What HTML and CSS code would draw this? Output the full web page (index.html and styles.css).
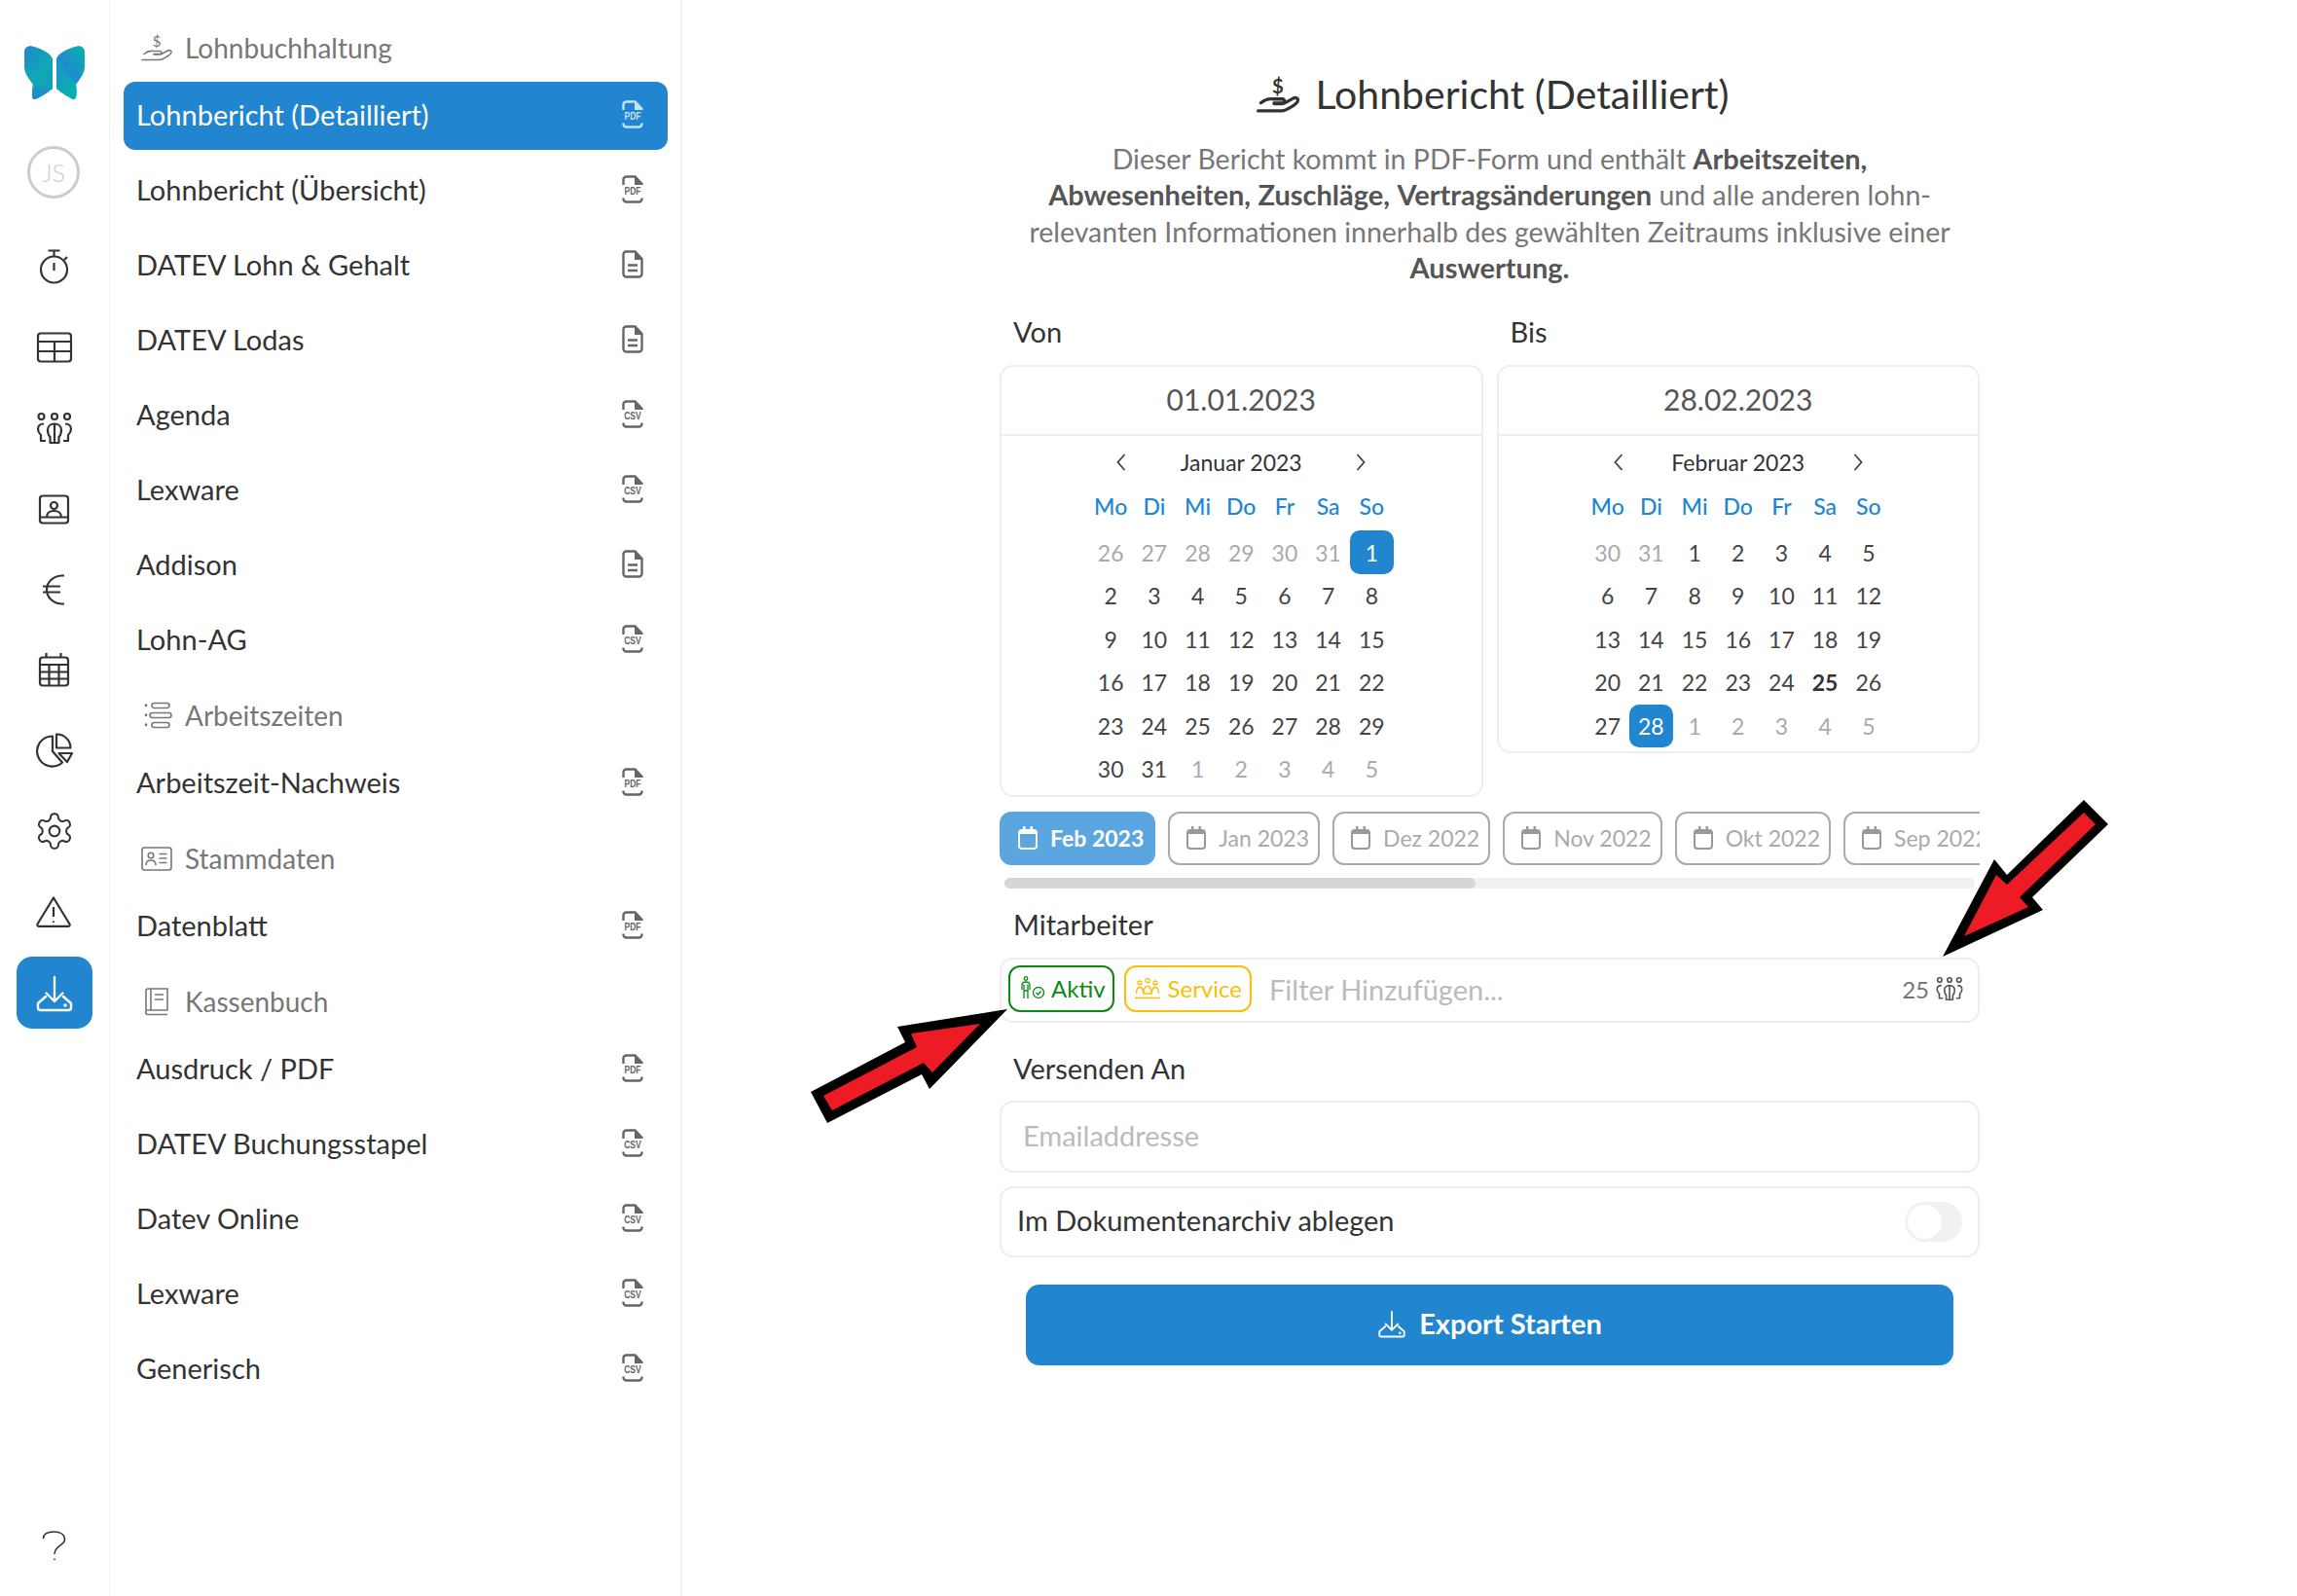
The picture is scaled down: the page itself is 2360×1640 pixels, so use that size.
FILE: index.html
```html
<!DOCTYPE html>
<html lang="de">
<head>
    <meta charset="utf-8">
    <title>Lohnbericht (Detailliert)</title>
    <link rel="stylesheet" href="styles.css">
</head>
<body>

<!-- icon sprite -->
<svg class="sprite" width="0" height="0">
    <defs>
        <linearGradient id="wing-left" x1="0" y1="0" x2="0.7" y2="1">
            <stop offset="0" stop-color="#2186d0"/>
            <stop offset="0.6" stop-color="#0fa8b4"/>
            <stop offset="1" stop-color="#12a0bc"/>
        </linearGradient>
        <linearGradient id="wing-right" x1="1" y1="0" x2="0.3" y2="1">
            <stop offset="0" stop-color="#02b5a8"/>
            <stop offset="0.55" stop-color="#1f8ccd"/>
            <stop offset="1" stop-color="#1a96c6"/>
        </linearGradient>
        <linearGradient id="wing-low-left" x1="0" y1="0" x2="0" y2="1">
            <stop offset="0" stop-color="#12a0bc"/>
            <stop offset="1" stop-color="#2186d0"/>
        </linearGradient>
        <linearGradient id="wing-low-right" x1="0" y1="0" x2="1" y2="1">
            <stop offset="0" stop-color="#1a96c6"/>
            <stop offset="1" stop-color="#02b5a8"/>
        </linearGradient>
        <g id="file-frame">
            <path d="M1.500 10V4.500a3 3 0 0 1 3-3H13.500L20.500 9v1" fill="none" stroke="currentColor" stroke-width="2.400"/>
            <path d="M13 1.500h1L21 9v1h-8z" fill="currentColor"/>
            <path d="M1.500 23.500v1a3 3 0 0 0 3 3h13a3 3 0 0 0 3-3v-1" fill="none" stroke="currentColor" stroke-width="2.400"/>
        </g>
        <g id="hand-shape">
            <path d="M1 26.500H19c3 0 11-5 12-7.500.7-2-1.500-3-3.500-2L21 20.500H13M3 20.500c3-2.500 6-3.500 9-3h7c2.500 0 2.500 3.500 0 3.500h-6" fill="none" stroke="currentColor" stroke-linecap="round"/>
        </g>
    </defs>
    <symbol id="i-doc" viewBox="0 0 22 29">
        <path d="M1.500 4.500a3 3 0 0 1 3-3H13.500L20.500 9v15.500a3 3 0 0 1-3 3h-13a3 3 0 0 1-3-3z" fill="none" stroke="currentColor" stroke-width="2.400"/>
        <path d="M13 1.500h1L21 9v1h-8z" fill="currentColor"/>
        <path d="M6 15.500h10M6 21h10" stroke="currentColor" stroke-width="2.400"/>
    </symbol>
    <symbol id="i-download" viewBox="0 0 40 40">
        <path d="M20 4v25M11.500 20.500l8.500 8.500 8.500-8.500M11 24l-8 7v4.500a2.500 2.500 0 0 0 2.500 2.500h29a2.500 2.500 0 0 0 2.500-2.500V31l-8-7" fill="none" stroke="currentColor" stroke-width="2.400" stroke-linecap="round" stroke-linejoin="round"/>
        <circle cx="31" cy="33" r="1.800" fill="currentColor"/>
    </symbol>
    <symbol id="i-people" viewBox="0 0 40 40">
        <g fill="none" stroke="currentColor" stroke-width="2.200" stroke-linejoin="round">
            <circle cx="6.500" cy="8" r="3"/><circle cx="20" cy="8" r="3"/><circle cx="33" cy="8" r="3"/>
            <path d="M15.500 35v-6c-2-2-2.500-4.500-2.500-7 0-4 3-6.500 7-6.500s7 2.500 7 6.500c0 2.500-.5 5-2.500 7v6zM20 16v19"/>
            <path d="M9 15.500c-4 0-6 2.500-6 5.500 0 2.500 1.500 4.500 3 6v6h5M31 15.500c4 0 6 2.500 6 5.500 0 2.500-1.500 4.500-3 6v6h-5"/>
        </g>
    </symbol>
    <symbol id="i-month" viewBox="0 0 20 24">
        <rect x="1" y="4" width="18" height="19" rx="3" fill="none" stroke="currentColor" stroke-width="2"/>
        <path d="M1 4h18v4H1zM5 0h2.500v4H5zM12.500 0H15v4h-2.500z" fill="currentColor"/>
    </symbol>
    <symbol id="i-prev" viewBox="0 0 12 20">
        <path d="M9.500 2 2.500 10l7 8" fill="none" stroke="currentColor" stroke-width="1.800"/>
    </symbol>
    <symbol id="i-next" viewBox="0 0 12 20">
        <path d="M2.500 2l7 8-7 8" fill="none" stroke="currentColor" stroke-width="1.800"/>
    </symbol>
</svg>

<div class="app">
    <aside class="rail">
        <svg class="logo" viewBox="0 0 62 56">
            <path d="M0 6C0 2 4-.5 8 .5 18 3 27 8 29 13v31c-5 4-15 11-19 11-3 0-2-8-1-15C4 33 0 28 0 21z" fill="url(#wing-left)"/>
            <path d="M9 40l20 4c-5 4-15 11-19 11-3 0-2-8-1-15z" fill="url(#wing-low-left)"/>
            <path d="M62 6c0-4-4-6.500-8-5.500C44 3 35 8 33 13v31c5 4 15 11 18 11 3 0 3-8 2-15 5-7 9-12 9-19z" fill="url(#wing-right)"/>
            <path d="M33 13l20 27c1 7 1 15-2 15-3 0-13-7-18-11z" fill="url(#wing-low-right)"/>
        </svg>
        <div class="avatar">JS</div>

        <a class="rail-item">
            <svg viewBox="0 0 40 40"><circle cx="19.500" cy="23" r="13.500"/><path d="M13.500 3.500h12M19.500 3.500V9.500M19.500 16v8M30 13l3-3"/></svg>
        </a>
        <a class="rail-item">
            <svg viewBox="0 0 40 40"><rect x="3" y="5.500" width="34" height="29" rx="3"/><path d="M3 14h34M3 24h34M20 14v20"/></svg>
        </a>
        <a class="rail-item">
            <svg><use href="#i-people"/></svg>
        </a>
        <a class="rail-item">
            <svg viewBox="0 0 40 40"><rect x="5" y="6.500" width="29" height="28" rx="3"/><circle cx="19.500" cy="16.500" r="3.500"/><path d="M12 28.500c0-4.500 3-6.500 7.500-6.500s7.500 2 7.500 6.500M5 28.500h29"/></svg>
        </a>
        <a class="rail-item">
            <svg viewBox="0 0 40 40"><path d="M30 5.500h-2C19 5.500 12 12 12 20s7 14.500 16 14.500h2M8 16.500h18M8 22.500h18"/></svg>
        </a>
        <a class="rail-item">
            <svg viewBox="0 0 40 40"><rect x="5" y="7.500" width="29" height="29" rx="3"/><path d="M5 15h29M5 22.500h29M5 29.500h29M14.500 15v21.500M24.500 15v21.500M11.500 3v4.500M26.500 3v4.500"/></svg>
        </a>
        <a class="rail-item">
            <svg viewBox="0 0 40 40"><path d="M18 5.500A15.500 15.500 0 1 0 28 32.500L18 21zM22 3.500A14 14 0 0 1 36.500 17.500H22zM24.500 23h13.500l-5 9z"/></svg>
        </a>
        <a class="rail-item">
            <svg viewBox="0 0 40 40"><g transform="translate(-1.400 -1.400) scale(1.780)" stroke-width="1.150"><path d="M12.220 2h-.44a2 2 0 0 0-2 2v.18a2 2 0 0 1-1 1.730l-.43.25a2 2 0 0 1-2 0l-.15-.08a2 2 0 0 0-2.730.73l-.22.38a2 2 0 0 0 .73 2.730l.15.100a2 2 0 0 1 1 1.720v.51a2 2 0 0 1-1 1.740l-.15.09a2 2 0 0 0-.73 2.730l.22.38a2 2 0 0 0 2.730.73l.15-.08a2 2 0 0 1 2 0l.43.25a2 2 0 0 1 1 1.730V20a2 2 0 0 0 2 2h.44a2 2 0 0 0 2-2v-.18a2 2 0 0 1 1-1.730l.43-.25a2 2 0 0 1 2 0l.15.08a2 2 0 0 0 2.730-.73l.22-.39a2 2 0 0 0-.73-2.730l-.15-.08a2 2 0 0 1-1-1.740v-.5a2 2 0 0 1 1-1.740l.15-.09a2 2 0 0 0 .73-2.730l-.22-.38a2 2 0 0 0-2.730-.73l-.15.08a2 2 0 0 1-2 0l-.43-.25a2 2 0 0 1-1-1.730V4a2 2 0 0 0-2-2z"/><circle cx="12" cy="12" r="3"/></g></svg>
        </a>
        <a class="rail-item">
            <svg viewBox="0 0 40 40"><path d="M19 5.500 35.500 32.500a1.500 1.500 0 0 1-1.300 2.300H3.800a1.500 1.500 0 0 1-1.300-2.300zM19 15v10M19 29.500v1.500"/></svg>
        </a>
        <a class="rail-item active">
            <span class="rail-box"><svg><use href="#i-download"/></svg></span>
        </a>
        <a class="rail-item help">
            <svg viewBox="0 0 40 40"><path d="M8.500 13C8.500 8 13 6 19.500 6S30.500 9 30.500 14c0 6-10.500 6-10.500 15M20 33.500v1.500"/></svg>
        </a>
    </aside>

    <nav class="reports">
        <div class="section-head">
            <svg class="section-icon" viewBox="0 0 32 28"><text x="16" y="13" text-anchor="middle" class="hand-label">$</text><use href="#hand-shape"/></svg>
            <span>Lohnbuchhaltung</span>
        </div>
        <a class="report active"><span>Lohnbericht (Detailliert)</span><svg class="file-icon" viewBox="0 0 22 29"><use href="#file-frame"/><text y="20.500" class="file-label">PDF</text></svg></a>
        <a class="report"><span>Lohnbericht (Übersicht)</span><svg class="file-icon" viewBox="0 0 22 29"><use href="#file-frame"/><text y="20.500" class="file-label">PDF</text></svg></a>
        <a class="report"><span>DATEV Lohn &amp; Gehalt</span><svg class="file-icon"><use href="#i-doc"/></svg></a>
        <a class="report"><span>DATEV Lodas</span><svg class="file-icon"><use href="#i-doc"/></svg></a>
        <a class="report"><span>Agenda</span><svg class="file-icon" viewBox="0 0 22 29"><use href="#file-frame"/><text y="20.500" class="file-label">CSV</text></svg></a>
        <a class="report"><span>Lexware</span><svg class="file-icon" viewBox="0 0 22 29"><use href="#file-frame"/><text y="20.500" class="file-label">CSV</text></svg></a>
        <a class="report"><span>Addison</span><svg class="file-icon"><use href="#i-doc"/></svg></a>
        <a class="report"><span>Lohn-AG</span><svg class="file-icon" viewBox="0 0 22 29"><use href="#file-frame"/><text y="20.500" class="file-label">CSV</text></svg></a>

        <div class="section-head">
            <svg class="section-icon" viewBox="0 0 32 28">
                <path d="M5 3.500v.5M5 13.500v.5M5 23.500v.5" stroke="currentColor" stroke-width="2.600" stroke-linecap="round"/>
                <path d="M13.500 1.500h13a2.500 2.500 0 0 1 0 5h-13a2.500 2.500 0 0 1 0-5zM11.500 11.500h17a2.500 2.500 0 0 1 0 5h-17a2.500 2.500 0 0 1 0-5zM13.500 21.500h13a2.500 2.500 0 0 1 0 5h-13a2.500 2.500 0 0 1 0-5z" fill="none" stroke="currentColor"/>
            </svg>
            <span>Arbeitszeiten</span>
        </div>
        <a class="report"><span>Arbeitszeit-Nachweis</span><svg class="file-icon" viewBox="0 0 22 29"><use href="#file-frame"/><text y="20.500" class="file-label">PDF</text></svg></a>

        <div class="section-head">
            <svg class="section-icon" viewBox="0 0 32 28">
                <rect x="1" y="3" width="30" height="23" rx="2.500" fill="none" stroke="currentColor"/>
                <circle cx="10" cy="11" r="2.800" fill="none" stroke="currentColor"/>
                <path d="M5 21c0-3.500 2-5 5-5s5 1.500 5 5M18.500 9.500h8M18.500 14h8M18.500 18.500h8" fill="none" stroke="currentColor"/>
            </svg>
            <span>Stammdaten</span>
        </div>
        <a class="report"><span>Datenblatt</span><svg class="file-icon" viewBox="0 0 22 29"><use href="#file-frame"/><text y="20.500" class="file-label">PDF</text></svg></a>

        <div class="section-head">
            <svg class="section-icon" viewBox="0 0 32 28">
                <path d="M5 23V3a2 2 0 0 1 2-2h20v22H7a2 2 0 0 0 0 4.500h20M10 1v22M14 7h9M14 12h9" fill="none" stroke="currentColor"/>
            </svg>
            <span>Kassenbuch</span>
        </div>
        <a class="report"><span>Ausdruck / PDF</span><svg class="file-icon" viewBox="0 0 22 29"><use href="#file-frame"/><text y="20.500" class="file-label">PDF</text></svg></a>
        <a class="report"><span>DATEV Buchungsstapel</span><svg class="file-icon" viewBox="0 0 22 29"><use href="#file-frame"/><text y="20.500" class="file-label">CSV</text></svg></a>
        <a class="report"><span>Datev Online</span><svg class="file-icon" viewBox="0 0 22 29"><use href="#file-frame"/><text y="20.500" class="file-label">CSV</text></svg></a>
        <a class="report"><span>Lexware</span><svg class="file-icon" viewBox="0 0 22 29"><use href="#file-frame"/><text y="20.500" class="file-label">CSV</text></svg></a>
        <a class="report"><span>Generisch</span><svg class="file-icon" viewBox="0 0 22 29"><use href="#file-frame"/><text y="20.500" class="file-label">CSV</text></svg></a>
    </nav>

    <main class="content">
        <div class="column">
            <h1 class="title">
                <svg class="title-icon" viewBox="0 0 32 28"><text x="16" y="13" text-anchor="middle" class="hand-label">$</text><use href="#hand-shape"/></svg>
                Lohnbericht (Detailliert)
            </h1>
            <p class="intro">Dieser Bericht kommt in PDF-Form und enthält <b>Arbeitszeiten,</b> <b>Abwesenheiten,</b> <b>Zuschläge,</b> <b>Vertragsänderungen</b> und alle anderen lohn-relevanten Informationen innerhalb des gewählten Zeitraums inklusive einer <b>Auswertung.</b></p>

            <div class="dates">
                <div class="date-col">
                    <label class="field-label">Von</label>
                    <div class="date-card">
                        <div class="date-value">01.01.2023</div>
                        <div class="month-nav"><svg class="chev"><use href="#i-prev"/></svg><span>Januar 2023</span><svg class="chev"><use href="#i-next"/></svg></div>
                        <div class="cal">
                            <span class="wd">Mo</span><span class="wd">Di</span><span class="wd">Mi</span><span class="wd">Do</span><span class="wd">Fr</span><span class="wd">Sa</span><span class="wd">So</span>
                            <span class="off">26</span><span class="off">27</span><span class="off">28</span><span class="off">29</span><span class="off">30</span><span class="off">31</span><span class="sel">1</span>
                            <span>2</span><span>3</span><span>4</span><span>5</span><span>6</span><span>7</span><span>8</span>
                            <span>9</span><span>10</span><span>11</span><span>12</span><span>13</span><span>14</span><span>15</span>
                            <span>16</span><span>17</span><span>18</span><span>19</span><span>20</span><span>21</span><span>22</span>
                            <span>23</span><span>24</span><span>25</span><span>26</span><span>27</span><span>28</span><span>29</span>
                            <span>30</span><span>31</span><span class="off">1</span><span class="off">2</span><span class="off">3</span><span class="off">4</span><span class="off">5</span>
                        </div>
                    </div>
                </div>
                <div class="date-col">
                    <label class="field-label">Bis</label>
                    <div class="date-card">
                        <div class="date-value">28.02.2023</div>
                        <div class="month-nav"><svg class="chev"><use href="#i-prev"/></svg><span>Februar 2023</span><svg class="chev"><use href="#i-next"/></svg></div>
                        <div class="cal">
                            <span class="wd">Mo</span><span class="wd">Di</span><span class="wd">Mi</span><span class="wd">Do</span><span class="wd">Fr</span><span class="wd">Sa</span><span class="wd">So</span>
                            <span class="off">30</span><span class="off">31</span><span>1</span><span>2</span><span>3</span><span>4</span><span>5</span>
                            <span>6</span><span>7</span><span>8</span><span>9</span><span>10</span><span>11</span><span>12</span>
                            <span>13</span><span>14</span><span>15</span><span>16</span><span>17</span><span>18</span><span>19</span>
                            <span>20</span><span>21</span><span>22</span><span>23</span><span>24</span><span class="today">25</span><span>26</span>
                            <span>27</span><span class="sel">28</span><span class="off">1</span><span class="off">2</span><span class="off">3</span><span class="off">4</span><span class="off">5</span>
                        </div>
                    </div>
                </div>
            </div>

            <div class="months">
                <button class="month current"><svg><use href="#i-month"/></svg>Feb 2023</button>
                <button class="month"><svg><use href="#i-month"/></svg>Jan 2023</button>
                <button class="month"><svg><use href="#i-month"/></svg>Dez 2022</button>
                <button class="month"><svg><use href="#i-month"/></svg>Nov 2022</button>
                <button class="month"><svg><use href="#i-month"/></svg>Okt 2022</button>
                <button class="month"><svg><use href="#i-month"/></svg>Sep 2022</button>
            </div>
            <div class="scrollbar"><div class="scroll-thumb"></div></div>

            <label class="field-label staff-label">Mitarbeiter</label>
            <div class="filter-box">
                <span class="chip chip-green">
                    <svg viewBox="0 0 24 24">
                        <circle cx="5" cy="2.500" r="1.800"/>
                        <path d="M1 14V9c0-2 1.500-3 4-3s4 1 4 3v5M3 8.500V23M7 8.500V23M3 15h4"/>
                        <circle cx="18" cy="17" r="5.500"/>
                        <path d="M15.500 17l2 2 3-3.500"/>
                    </svg>
                    Aktiv
                </span>
                <span class="chip chip-yellow">
                    <svg viewBox="0 0 28 24">
                        <circle cx="14" cy="4.500" r="2.200"/><circle cx="6" cy="7" r="2"/><circle cx="22" cy="7" r="2"/>
                        <path d="M10 18c0-5 1.500-7.500 4-7.500s4 2.500 4 7.500zM2.500 18c0-4 1-6.500 3.500-6.500s3.500 2.500 3.500 6.500M25.500 18c0-4-1-6.500-3.500-6.500s-3.500 2.500-3.500 6.500M1 22.500h26"/>
                    </svg>
                    Service
                </span>
                <span class="filter-placeholder">Filter Hinzufügen...</span>
                <span class="filter-count">25 <svg><use href="#i-people"/></svg></span>
            </div>

            <label class="field-label send-label">Versenden An</label>
            <input class="email" type="text" placeholder="Emailaddresse">
            <div class="archive">
                <span>Im Dokumentenarchiv ablegen</span>
                <span class="toggle"><span class="knob"></span></span>
            </div>
            <button class="export"><svg><use href="#i-download"/></svg>Export Starten</button>
        </div>
    </main>
</div>

<!-- annotation arrows lying over the page -->
<svg class="arrow arrow-right" viewBox="0 0 175 165">
    <polygon class="arrow-edge" points="146,2 171,27 93,102 104,115 1,163 54,63 67,79"/>
    <polygon class="arrow-fill" points="146,15 158,27 80,102 89,112 23,142 56,79 67,89"/>
</svg>
<svg class="arrow arrow-left" viewBox="0 0 205 122">
    <polygon class="arrow-edge" points="204,2 124,84 116,69 19,119 2,87 99,36 91,20"/>
    <polygon class="arrow-fill" points="176,17 127,67 118,57 24,106 15,91 111,41 105,27"/>
</svg>

</body>
</html>
```

FILE: styles.css
```css
* {
    box-sizing: border-box;
}

html, body {
    margin: 0;
    height: 100%;
    overflow: hidden;
}

body {
    position: relative;
    font-family: 'Lato', 'Noto Sans', sans-serif;
    font-size: 29px;
    color: #333;
    background-color: #fff;
}

.sprite {
    position: absolute;
}

.app {
    display: flex;
    height: 1640px;
}

/* icon rail */
.rail {
    width: 113px;
    flex: none;
    display: flex;
    flex-direction: column;
    align-items: center;
    padding: 47px 0 11px;
    border-right: 1px solid #f3f3f3;
}

.logo {
    width: 62px;
    height: 56px;
    flex: none;
}

.avatar {
    width: 54px;
    height: 54px;
    margin: 47px 2px 29px 0;
    flex: none;
    border: 3px solid #ccc;
    border-radius: 50%;
    display: flex;
    align-items: center;
    justify-content: center;
    color: #ccc;
    font-size: 25px;
    font-weight: 300;
}

.rail-item {
    width: 100%;
    height: 82.8px;
    flex: none;
    display: flex;
    align-items: center;
    justify-content: center;
    color: #333;
}

.rail-item svg {
    width: 40px;
    height: 40px;
    fill: none;
    stroke: #333;
    stroke-width: 2.2;
    stroke-linejoin: round;
}

.rail-item svg use {
    stroke: none;
}

.rail-item.active {
    color: #fff;
}

.rail-box {
    width: 78px;
    height: 74px;
    display: flex;
    align-items: center;
    justify-content: center;
    background-color: #2185d0;
    border-radius: 16px;
}

.rail-box svg {
    stroke: none;
}

.help {
    margin-top: auto;
}

.help svg {
    stroke-width: 1.6;
}

/* report list */
.reports {
    width: 588px;
    flex: none;
    padding: 14px 13px 0 14px;
    border-right: 2px solid #f3f3f3;
}

.section-head {
    height: 70px;
    display: flex;
    align-items: center;
    padding-left: 18px;
    gap: 13px;
    color: #777;
    font-size: 28px;
}

.section-icon {
    width: 32px;
    height: 28px;
    flex: none;
    stroke-width: 1.6;
    overflow: visible;
}

.hand-label {
    font-family: 'Lato', sans-serif;
    font-size: 15px;
    fill: currentColor;
    stroke: none;
}

.file-label {
    font-family: 'Liberation Sans', sans-serif;
    font-size: 11px;
    font-weight: 700;
    text-anchor: middle;
    fill: currentColor;
    transform: translateX(11px) scaleX(0.78);
}

.report {
    height: 70px;
    margin-bottom: 7px;
    padding: 0 25px 3px 13px;
    display: flex;
    align-items: center;
    justify-content: space-between;
    border-radius: 12px;
    color: #333;
}

.report.active {
    background-color: #2185d0;
    color: #fff;
}

.file-icon {
    width: 22px;
    height: 29px;
    flex: none;
    color: #666;
    overflow: visible;
}

.report.active .file-icon {
    color: #c6e0f5;
}

/* main column */
.content {
    flex: 1;
    display: flex;
    justify-content: center;
    padding-top: 74px;
}

.column {
    width: 1007px;
}

.title {
    margin: 0;
    height: 48px;
    padding: 0 0 2px 6px;
    display: flex;
    align-items: center;
    justify-content: center;
    gap: 17px;
    font-size: 41px;
    line-height: 48px;
    font-weight: 400;
    color: #333;
}

.title-icon {
    width: 44px;
    height: 38px;
    color: #333;
    stroke-width: 2.4;
    overflow: visible;
}

.title-icon .hand-label {
    font-weight: 700;
}

.intro {
    margin: 23px 20px 0;
    color: #777;
    font-size: 28.5px;
    text-align: center;
    line-height: 37.4px;
}

.intro b {
    color: #555;
    font-size: 29px;
    line-height: 30px;
    font-weight: 700;
}

.dates {
    display: flex;
    align-items: flex-start;
    gap: 14px;
    margin-top: 28px;
}

.date-col {
    width: 496.5px;
}

.field-label {
    display: block;
    height: 38px;
    line-height: 36px;
    padding-left: 14px;
    color: #333;
}

.date-card {
    margin-top: 14px;
    border: 2px solid #eee;
    border-radius: 14px;
    padding-bottom: 4px;
}

.date-value {
    height: 71px;
    line-height: 66px;
    text-align: center;
    border-bottom: 2px solid #eee;
    color: #555;
    font-size: 30px;
}

.month-nav {
    width: 266px;
    height: 40px;
    margin: 7px auto 0;
    display: flex;
    align-items: center;
    justify-content: space-between;
    font-size: 23px;
    color: #333;
}

.chev {
    width: 12px;
    height: 20px;
    margin: 0 4px;
    color: #444;
}

.cal {
    display: grid;
    grid-template-columns: repeat(7, 44.7px);
    grid-template-rows: 47.6px;
    grid-auto-rows: 44.6px;
    justify-content: center;
    margin-top: 3px;
    font-size: 23px;
    color: #444;
}

.cal span {
    display: flex;
    align-items: center;
    justify-content: center;
}

.cal .wd {
    padding-bottom: 3px;
    color: #2185d0;
    font-weight: 500;
}

.cal .off {
    color: #aaa;
}

.cal .sel {
    background-color: #2185d0;
    color: #fff;
    border-radius: 10px;
}

.cal .today {
    color: #333;
    font-weight: 700;
}

/* month shortcuts */
.months {
    display: flex;
    gap: 13px;
    margin-top: 15px;
    overflow: hidden;
}

.month {
    height: 55px;
    flex: none;
    padding: 0 9px 0 17px;
    display: flex;
    align-items: center;
    gap: 13px;
    font-family: inherit;
    font-size: 23px;
    color: #aaa;
    background-color: #fff;
    border: 2px solid #aaa;
    border-radius: 12px;
}

.month svg {
    width: 20px;
    height: 24px;
    color: #999;
}

.month.current {
    padding-right: 10px;
    background-color: #5ca6df;
    border-color: #5ca6df;
    color: #fff;
    font-weight: 700;
}

.month.current svg {
    color: #fff;
}

.scrollbar {
    height: 11px;
    margin: 13px 5px 0;
    background-color: #f1f1f1;
    border-radius: 6px;
}

.scroll-thumb {
    width: 484px;
    height: 11px;
    background-color: #d6d6d6;
    border-radius: 6px;
}

.staff-label {
    margin-top: 19px;
}

.filter-box {
    height: 67px;
    margin-top: 14px;
    padding: 0 14px 2px 7px;
    display: flex;
    align-items: center;
    border: 2px solid #eee;
    border-radius: 14px;
}

.chip {
    height: 48px;
    padding: 0 7px 2px 11px;
    margin-right: 10px;
    display: flex;
    align-items: center;
    gap: 7px;
    font-size: 24px;
    background-color: #fff;
    border: 2px solid;
    border-radius: 12px;
}

.chip svg {
    width: 24px;
    height: 24px;
    fill: none;
    stroke: currentColor;
    stroke-width: 1.3;
}

.chip-green {
    color: #0a8a12;
    border-color: #0a8a12;
}

.chip-yellow {
    padding: 0 8px 2px 8px;
    color: #fbbd08;
    border-color: #fbbd08;
}

.chip-yellow svg {
    width: 28px;
}

.filter-placeholder {
    margin-left: 8px;
    color: #bbb;
}

.filter-count {
    margin-left: auto;
    display: flex;
    align-items: center;
    gap: 6px;
    font-size: 24px;
    color: #777;
}

.filter-count svg {
    width: 30px;
    height: 30px;
    color: #555;
}

.send-label {
    margin-top: 29px;
}

.email {
    display: block;
    width: 100%;
    height: 74px;
    margin-top: 13px;
    padding: 0 22px 2px;
    border: 2px solid #eee;
    border-radius: 14px;
    font-family: inherit;
    font-size: 29px;
    color: #333;
    outline: none;
}

.email::placeholder {
    color: #bbb;
    opacity: 1;
}

.archive {
    height: 73px;
    margin-top: 14px;
    padding: 0 16px;
    display: flex;
    align-items: center;
    justify-content: space-between;
    border: 2px solid #eee;
    border-radius: 14px;
}

.archive > span:first-child {
    padding-bottom: 3px;
}

.toggle {
    width: 59px;
    height: 41px;
    padding: 3px;
    background-color: #f1f1f1;
    border-radius: 21px;
}

.knob {
    display: block;
    width: 35px;
    height: 35px;
    background-color: #fff;
    border-radius: 50%;
}

.export {
    width: 953px;
    height: 83px;
    margin: 28px 27px 0;
    padding: 0 0 3px;
    display: flex;
    align-items: center;
    justify-content: center;
    gap: 13px;
    font-family: inherit;
    font-size: 29px;
    font-weight: 700;
    color: #fff;
    background-color: #2185d0;
    border: none;
    border-radius: 14px;
}

.export svg {
    width: 30px;
    height: 30px;
}

/* arrows */
.arrow {
    position: absolute;
}

.arrow-right {
    left: 1995px;
    top: 820px;
    width: 175px;
    height: 165px;
}

.arrow-left {
    left: 831px;
    top: 1035px;
    width: 205px;
    height: 122px;
}

.arrow-edge {
    fill: #000;
}

.arrow-fill {
    fill: #ed1c24;
}
```
